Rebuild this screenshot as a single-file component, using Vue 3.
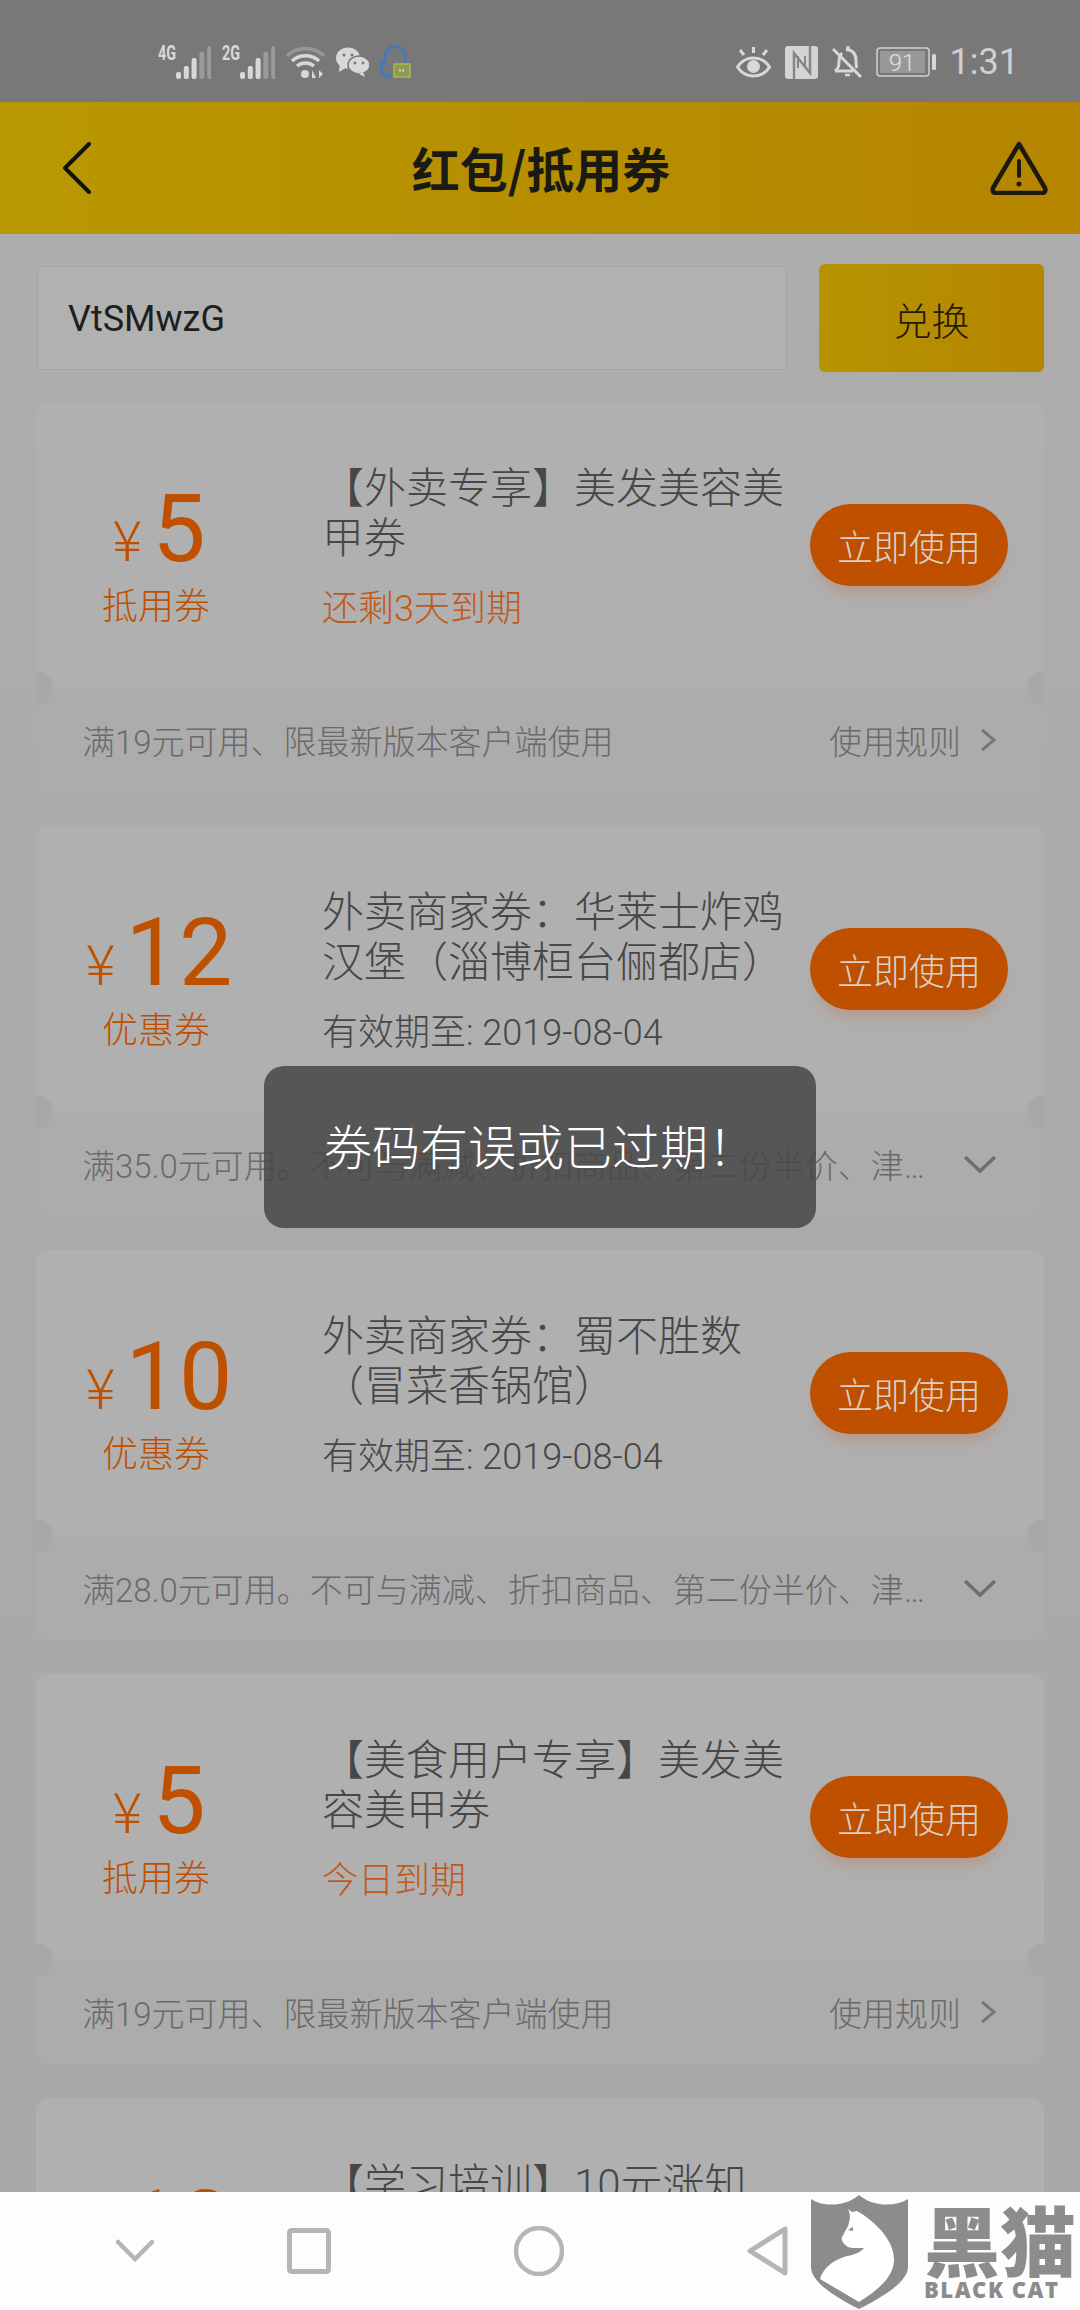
<script setup>
const coupons = [
  {
    amount: '5',
    label: '抵用券',
    title: ['【外卖专享】美发美容美', '甲券'],
    note: '还剩3天到期',
    urgent: true,
    rule: '满19元可用、限最新版本客户端使用',
    more: true,
  },
  {
    amount: '12',
    label: '优惠券',
    title: ['外卖商家券：华莱士炸鸡', '汉堡（淄博桓台俪都店）'],
    note: '有效期至: 2019-08-04',
    rule: '满35.0元可用。不可与满减、折扣商品、第二份半价、津贴同享',
  },
  {
    amount: '10',
    label: '优惠券',
    title: ['外卖商家券：蜀不胜数', '（冒菜香锅馆）'],
    note: '有效期至: 2019-08-04',
    rule: '满28.0元可用。不可与满减、折扣商品、第二份半价、津贴同享',
  },
  {
    amount: '5',
    label: '抵用券',
    title: ['【美食用户专享】美发美', '容美甲券'],
    note: '今日到期',
    urgent: true,
    rule: '满19元可用、限最新版本客户端使用',
    more: true,
  },
  {
    amount: '10',
    label: '优惠券',
    title: ['【学习培训】10元涨知', '识券'],
    note: '今日到期',
    urgent: true,
    rule: '满19元可用、限最新版本客户端使用',
    more: true,
  },
];

const bars = [
  { h: 7, c: '#d8d8d8' },
  { h: 13, c: '#d8d8d8' },
  { h: 21, c: '#d8d8d8' },
  { h: 27, c: '#9a9a9a' },
  { h: 33, c: '#9a9a9a' },
];
</script>

<template>
  <div class="page">
    <div class="status">
      <div class="status-left">
        <svg v-for="net in ['4G', '2G']" :key="net" width="53" height="34" viewBox="0 0 53 34">
          <text x="0" y="15" class="net-text" textLength="18" lengthAdjust="spacingAndGlyphs">{{ net }}</text>
          <rect
            v-for="(b, n) in bars"
            :key="n"
            :x="18 + n * 7.800"
            :y="34 - b.h"
            width="5"
            :height="b.h"
            rx="2"
            :fill="b.c"
          />
        </svg>
        <svg width="39" height="34" viewBox="0 0 39 34" fill="none">
          <path d="M1 11C11 1 28 1 38 11" stroke="#969696" stroke-width="3.500" />
          <path d="M6 16C13 9 26 9 33 16" stroke="#d8d8d8" stroke-width="3.500" />
          <path d="M11 21C16 17 23 17 28 21" stroke="#d8d8d8" stroke-width="3.500" />
          <circle cx="19" cy="29" r="4" fill="#d8d8d8" />
          <path d="M26 33V25L30 33ZM33 25V33L37 29Z" fill="#d8d8d8" />
        </svg>
        <svg width="33" height="30" viewBox="0 0 33 30">
          <ellipse cx="12" cy="11" rx="12" ry="10.500" fill="#d8d8d8" />
          <path d="M4 17L3 25L11 20Z" fill="#d8d8d8" />
          <ellipse cx="23" cy="18" rx="11" ry="9" fill="#d8d8d8" stroke="#787878" stroke-width="1.500" />
          <path d="M27 25L29 30L23 27Z" fill="#d8d8d8" />
          <circle cx="8" cy="8" r="1.500" fill="#787878" />
          <circle cx="16" cy="8" r="1.500" fill="#787878" />
          <circle cx="19" cy="16" r="1.400" fill="#787878" />
          <circle cx="27" cy="16" r="1.400" fill="#787878" />
        </svg>
        <svg width="31" height="36" viewBox="0 0 31 36" fill="none">
          <path d="M5 22V13C5 -1 25 -1 25 13V20" stroke="#4a78b4" stroke-width="3" />
          <path d="M5 17C-1 19 0 30 7 32H12" stroke="#4a78b4" stroke-width="3.500" />
          <rect x="14" y="20" width="16" height="13" fill="#8f9a58" stroke="#a9b84a" stroke-width="1.500" />
          <path d="M19 26.500H25" stroke="#d0d6a0" stroke-width="2" stroke-dasharray="2 1" />
        </svg>
      </div>
      <div class="status-right">
        <svg width="35" height="33" viewBox="0 0 35 33" fill="none">
          <path d="M1.500 21C9 9 26 9 33.500 21C26 33 9 33 1.500 21Z" stroke="#d8d8d8" stroke-width="3" />
          <circle cx="17.500" cy="20.500" r="6.500" fill="#d8d8d8" />
          <path d="M17.500 1V7M4 4L8 9M31 4L27 9" stroke="#d8d8d8" stroke-width="3" />
        </svg>
        <svg width="33" height="33" viewBox="0 0 33 33" fill="none">
          <rect width="33" height="33" rx="3" fill="#d4d4d4" />
          <path d="M9 33V7L25 27V0" stroke="#868686" stroke-width="2.500" />
          <path d="M13 10V22M20 22V10" stroke="#868686" stroke-width="2" />
        </svg>
        <svg width="30" height="32" viewBox="0 0 30 32" fill="none">
          <path d="M3 25C7 22 7 19 7 15C7 11 8 9 10 7M14 4C20 3 24 8 24 14C24 18 24 20 25 22M3 25H21" stroke="#d8d8d8" stroke-width="3" />
          <path d="M1 3L29 31" stroke="#d8d8d8" stroke-width="3" />
          <path d="M13 29H18" stroke="#d8d8d8" stroke-width="2.500" />
          <circle cx="16" cy="2" r="2" fill="#d8d8d8" />
        </svg>
        <svg width="60" height="30" viewBox="0 0 60 30" fill="none">
          <rect x="1" y="1" width="52" height="28" rx="3" stroke="#d0d0d0" stroke-width="1.500" />
          <rect x="4" y="4" width="45" height="22" fill="#989898" />
          <text x="26" y="24" class="batt-text" text-anchor="middle">91</text>
          <rect x="56" y="7" width="4" height="16" rx="1.500" fill="#d8d8d8" />
        </svg>
        <span class="time">1:31</span>
      </div>
    </div>

    <header class="header">
      <svg width="30" height="52" viewBox="0 0 30 52" fill="none">
        <path d="M27 2L3 26L27 50" stroke="#111" stroke-width="4" stroke-linecap="round" stroke-linejoin="round" />
      </svg>
      <h1 class="title">红包/抵用券</h1>
      <svg width="58" height="54" viewBox="0 0 58 54" fill="none">
        <path d="M29 3L55 47C56 50 55 52 52 52H6C3 52 2 50 3 47Z" stroke="#1c1a10" stroke-width="4.500" stroke-linejoin="round" />
        <path d="M29 20V35" stroke="#1c1a10" stroke-width="4" stroke-linecap="round" />
        <circle cx="29" cy="43" r="2.500" fill="#1c1a10" />
      </svg>
    </header>

    <main class="content">
      <div class="redeem">
        <div class="code">VtSMwzG</div>
        <button class="redeem-btn">兑换</button>
      </div>

      <section v-for="(c, i) in coupons" :key="i" class="card">
        <div class="card-main">
          <div class="value">
            <div class="amount"><span class="yen">¥</span>{{ c.amount }}</div>
            <div class="label">{{ c.label }}</div>
          </div>
          <div class="info">
            <div class="name">
              <div v-for="line in c.title" :key="line">{{ line }}</div>
            </div>
            <div class="note" :class="{ urgent: c.urgent }">{{ c.note }}</div>
          </div>
          <button class="use-btn">立即使用</button>
        </div>
        <div class="card-foot">
          <span class="rule">{{ c.rule }}</span>
          <span v-if="c.more" class="more">
            使用规则
            <svg width="16" height="24" viewBox="0 0 16 24" fill="none">
              <path d="M2 2L14 12L2 22" stroke="#777" stroke-width="3" />
            </svg>
          </span>
          <svg v-else class="down" width="34" height="20" viewBox="0 0 34 20" fill="none">
            <path d="M2 3L17 17L32 3" stroke="#6e6e6e" stroke-width="3.500" />
          </svg>
        </div>
        <i class="notch left"></i>
        <i class="notch right"></i>
      </section>
    </main>

    <nav class="nav">
      <svg width="38" height="24" viewBox="0 0 38 24" fill="none">
        <path d="M2 3L19 20L36 3" stroke="#b5b5b5" stroke-width="4.500" stroke-linecap="round" />
      </svg>
      <svg width="44" height="46" viewBox="0 0 44 46" fill="none">
        <rect x="2.500" y="2.500" width="39" height="41" rx="2" stroke="#b5b5b5" stroke-width="5" />
      </svg>
      <svg width="50" height="50" viewBox="0 0 50 50" fill="none">
        <circle cx="25" cy="25" r="23" stroke="#b5b5b5" stroke-width="4.500" />
      </svg>
      <svg width="42" height="50" viewBox="0 0 42 50" fill="none">
        <path d="M38 3L3 25L38 47Z" stroke="#b5b5b5" stroke-width="5" stroke-linejoin="round" />
      </svg>
    </nav>

    <div class="toast">券码有误或已过期！</div>

    <div class="watermark">
      <svg width="98" height="114" viewBox="0 0 98 114">
        <path d="M0 4C12 12 34 12 48 0C62 12 84 12 97 4V72C97 84 80 98 48 114C16 98 0 84 0 72Z" fill="#8c8c8c" />
        <path d="M37 14L41 17L46 16C64 26 84 46 83 66C82 80 72 92 48 107L9 84C14 68 30 62 41 60C47 58 51 56 53 53L41 53L37 52C31 48 30 44 31 42L37 31C39 25 40 20 37 14Z" fill="#fff" />
        <path d="M37 35L42 32L42 36Z" fill="#8c8c8c" />
      </svg>
      <div class="brand">
        <div class="brand-cn">黑猫</div>
        <div class="brand-en">BLACK CAT</div>
      </div>
    </div>
  </div>
</template>

<style scoped>
.page {
  position: relative;
  display: flex;
  flex-direction: column;
  width: 1080px;
  height: 2310px;
  overflow: hidden;
  background: #a9a9a9;
  font-family: Roboto, "Noto Sans CJK SC", sans-serif;
  font-weight: 300;
}
.status {
  display: flex;
  flex: none;
  align-items: center;
  justify-content: space-between;
  height: 102px;
  padding: 0 61px 0 158px;
  box-sizing: border-box;
  background: #787878;
}
.status-left,
.status-right {
  display: flex;
  align-items: center;
  margin-top: 22px;
}
.status-left {
  gap: 11px;
}
.status-right {
  gap: 14px;
}
.net-text {
  fill: #d8d8d8;
  font-family: Roboto, sans-serif;
  font-size: 20px;
  font-weight: 700;
}
.batt-text {
  fill: #e0e0e0;
  font-family: Roboto, sans-serif;
  font-size: 24px;
}
.time {
  color: #d0d0d0;
  font-size: 36px;
  font-weight: 400;
  line-height: 34px;
}
.header {
  display: flex;
  flex: none;
  align-items: center;
  justify-content: space-between;
  height: 132px;
  padding: 0 32px 0 62px;
  box-sizing: border-box;
  background: linear-gradient(90deg, #b89800, #b58500);
}
.title {
  margin: 0 0 2px;
  color: #1a1a14;
  font-family: "Noto Sans CJK SC", sans-serif;
  font-size: 48px;
  font-weight: 700;
  line-height: 60px;
}
.content {
  flex: 1;
  min-height: 0;
  overflow: hidden;
  padding: 30px 36px 0;
  background: linear-gradient(180deg, #adadad, #a8a8a8);
}
.redeem {
  display: flex;
  align-items: center;
  justify-content: space-between;
  height: 108px;
  margin-bottom: 30px;
}
.code {
  width: 750px;
  height: 104px;
  margin-left: 1px;
  padding-left: 30px;
  box-sizing: border-box;
  border: 1px solid #a4a4a4;
  border-radius: 4px;
  background: #b1b1b1;
  color: #1e1e1e;
  font-size: 36px;
  font-weight: 400;
  line-height: 104px;
}
.redeem-btn {
  width: 225px;
  height: 108px;
  padding: 0;
  border: none;
  border-radius: 6px;
  background: linear-gradient(90deg, #b69400, #b58500);
  color: #231a00;
  font-family: inherit;
  font-size: 38px;
  font-weight: 300;
}
.card {
  position: relative;
  height: 390px;
  margin-bottom: 34px;
  border-radius: 12px;
  overflow: hidden;
}
.card-main {
  display: grid;
  grid-template-columns: 240px 46px 1fr 198px;
  height: 286px;
  padding-right: 36px;
  box-sizing: border-box;
  background: #b0b0b0;
}
.value {
  grid-column: 1;
  padding-top: 77px;
  text-align: center;
  color: #bf5000;
}
.amount {
  height: 100px;
  padding-left: 6px;
  font-size: 95px;
  font-weight: 400;
  line-height: 100px;
}
.yen {
  margin-right: 10px;
  font-family: "Noto Sans CJK SC", sans-serif;
  font-size: 56px;
  line-height: 46px;
  font-weight: 300;
}
.label {
  margin-top: 6px;
  font-size: 36px;
  line-height: 44px;
}
.info {
  grid-column: 3;
  padding-top: 62px;
}
.name {
  color: #474747;
  font-size: 42px;
  line-height: 50px;
  white-space: nowrap;
}
.note {
  margin-top: 23px;
  color: #474747;
  font-size: 36px;
  line-height: 44px;
}
.note.urgent {
  color: #c05a1a;
}
.use-btn {
  grid-column: 4;
  align-self: center;
  height: 82px;
  padding: 0;
  border: none;
  border-radius: 41px;
  background: #bf5000;
  box-shadow: 0 12px 16px -6px rgba(191, 80, 0, 0.25);
  color: #d8d0c8;
  font-family: inherit;
  font-size: 36px;
  font-weight: 300;
  white-space: nowrap;
}
.card-foot {
  display: flex;
  align-items: center;
  justify-content: space-between;
  height: 104px;
  padding: 0 48px 0 46px;
  box-sizing: border-box;
  background: #acacac;
  color: #6a6a6a;
  font-size: 33px;
}
.rule {
  max-width: 850px;
  overflow: hidden;
  text-overflow: ellipsis;
  white-space: nowrap;
}
.more {
  display: flex;
  align-items: center;
  gap: 19px;
  white-space: nowrap;
}
.down {
  margin-right: -1px;
}
.notch {
  position: absolute;
  top: 269px;
  width: 34px;
  height: 34px;
  border-radius: 50%;
  background: #a8a8a8;
}
.notch.left {
  left: -17px;
}
.notch.right {
  right: -17px;
}
.nav {
  display: flex;
  flex: none;
  align-items: center;
  height: 118px;
  padding-left: 116px;
  gap: 133px;
  background: #fdfdfd;
}
.nav svg:nth-child(n + 3) {
  margin-left: 50px;
}
.toast {
  position: absolute;
  top: 1066px;
  left: 264px;
  width: 552px;
  height: 162px;
  padding-top: 4px;
  box-sizing: border-box;
  border-radius: 20px;
  background: rgba(70, 70, 70, 0.85);
  color: #fff;
  font-size: 48px;
  line-height: 158px;
  text-align: center;
}
.watermark {
  position: absolute;
  top: 2195px;
  left: 811px;
  display: flex;
  gap: 15px;
}
.brand {
  padding-top: 5px;
  color: #8c8c8c;
}
.brand-cn {
  font-family: "Noto Sans CJK SC", sans-serif;
  font-size: 76px;
  font-weight: 900;
  line-height: 76px;
  white-space: nowrap;
}
.brand-en {
  margin-top: 2px;
  font-family: "Open Sans", sans-serif;
  font-size: 22px;
  font-weight: 800;
  letter-spacing: 1.500px;
  line-height: 22px;
  white-space: nowrap;
}
</style>
